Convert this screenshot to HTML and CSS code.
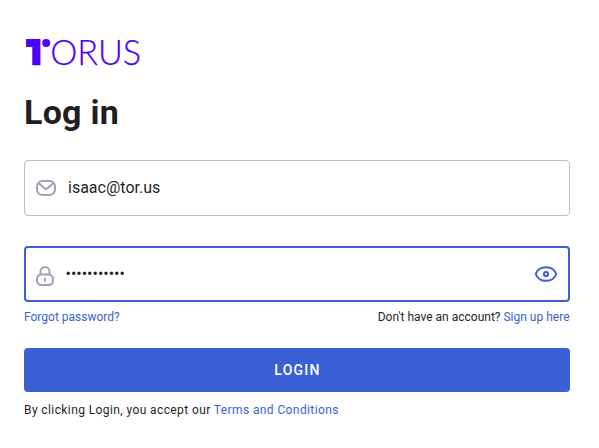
FILE: index.html
```html
<!DOCTYPE html>
<html lang="en">
<head>
<meta charset="utf-8">
<title>Torus - Log in</title>
<link rel="stylesheet" href="styles.css">
</head>
<body>
<main class="login">
  <svg class="logo" width="130" height="42" viewBox="0 0 130 42" role="img">
    <path d="M2 2h14.400v26.300H8.300V10H2z"/>
    <circle cx="22.200" cy="6" r="4"/>
    <text class="logo-text" x="26.200" y="28" textLength="91" lengthAdjust="spacingAndGlyphs">ORUS</text>
  </svg>
  <h1 class="title">Log in</h1>
  <form class="form">
    <label class="field">
      <svg class="icon" width="24" height="24" viewBox="0 0 24 24">
        <rect x="3" y="5" width="18" height="14" rx="5.500"/>
        <path d="M4.500 7l6.300 5.400q1.200 1 2.400 0L19.500 7"/>
      </svg>
      <input class="input" type="text" value="isaac@tor.us">
    </label>
    <label class="field field-active">
      <svg class="icon icon-lock" width="24" height="24" viewBox="0 0 24 24">
        <rect x="4" y="10.500" width="16" height="10.500" rx="4.500"/>
        <path d="M7.500 10.500V7.500a4.500 4.500 0 0 1 9 0V10.500M12 14v3.800"/>
      </svg>
      <input class="input input-password" type="password" value="password123">
      <svg class="icon icon-eye" width="24" height="24" viewBox="0 0 24 24">
        <path d="M1.800 12C3 7.500 7.500 5.200 12 5.200S21 7.500 22.200 12C21 16.500 16.500 18.800 12 18.800S3 16.500 1.800 12z"/>
        <circle cx="12" cy="12" r="2.100"/>
      </svg>
    </label>
    <div class="links">
      <a class="link">Forgot password?</a>
      <span>Don't have an account? <a class="link">Sign up here</a></span>
    </div>
    <button class="button" type="button">LOGIN</button>
    <p class="terms">By clicking Login, you accept our <a class="link">Terms and Conditions</a></p>
  </form>
</main>
</body>
</html>
```
FILE: styles.css
```css
* { box-sizing: border-box; }
body {
  margin: 0;
  background: #fff;
  color: #1f1f1f;
  font-family: Roboto, sans-serif;
}
.login { width: 570px; padding: 37px 0 0 24px; }
.logo { display: block; fill: #4f00ff; }
.logo-text {
  font: 300 36px Lato, sans-serif;
  stroke: #4f00ff;
  stroke-width: 0.25px;
}
.title {
  margin: 13px 0 28px;
  font-size: 34px;
  line-height: 40px;
  font-weight: 700;
  letter-spacing: 0.25px;
}
.field {
  display: flex;
  align-items: center;
  height: 56px;
  margin-bottom: 30px;
  padding: 0 10px 0 9px;
  border: 1px solid #c0c0c0;
  border-radius: 4px;
}
.field-active {
  margin-bottom: 8px;
  padding: 0 10px 0 7px;
  border: 2px solid #3b5fd4;
}
.icon {
  flex: none;
  fill: none;
  stroke: #a2a0b7;
  stroke-width: 2;
}
.icon-lock { margin-top: 4px; }
.icon-eye { stroke: #3b5fd4; }
.input {
  flex: 1;
  min-width: 0;
  margin: 0 0 0 10px;
  padding: 0;
  border: 0;
  outline: 0;
  background: transparent;
  color: #1f1f1f;
  font: 16px/20px Roboto, sans-serif;
}
.input-password { margin-left: 8.5px; }
.links {
  display: flex;
  justify-content: space-between;
  margin-bottom: 24px;
  padding-right: 0.5px;
  font-size: 12px;
  line-height: 14px;
}
.link { color: #3b5fd4; }
.button {
  display: block;
  width: 100%;
  height: 44px;
  padding-left: 7px;
  border: 0;
  border-radius: 4px;
  background: #3b5fd4;
  color: #fff;
  font: 500 14px/20px Roboto, sans-serif;
  letter-spacing: 1.25px;
}
.terms {
  margin: 11px 0 0;
  font-size: 12px;
  line-height: 14px;
  letter-spacing: 0.4px;
}
```
